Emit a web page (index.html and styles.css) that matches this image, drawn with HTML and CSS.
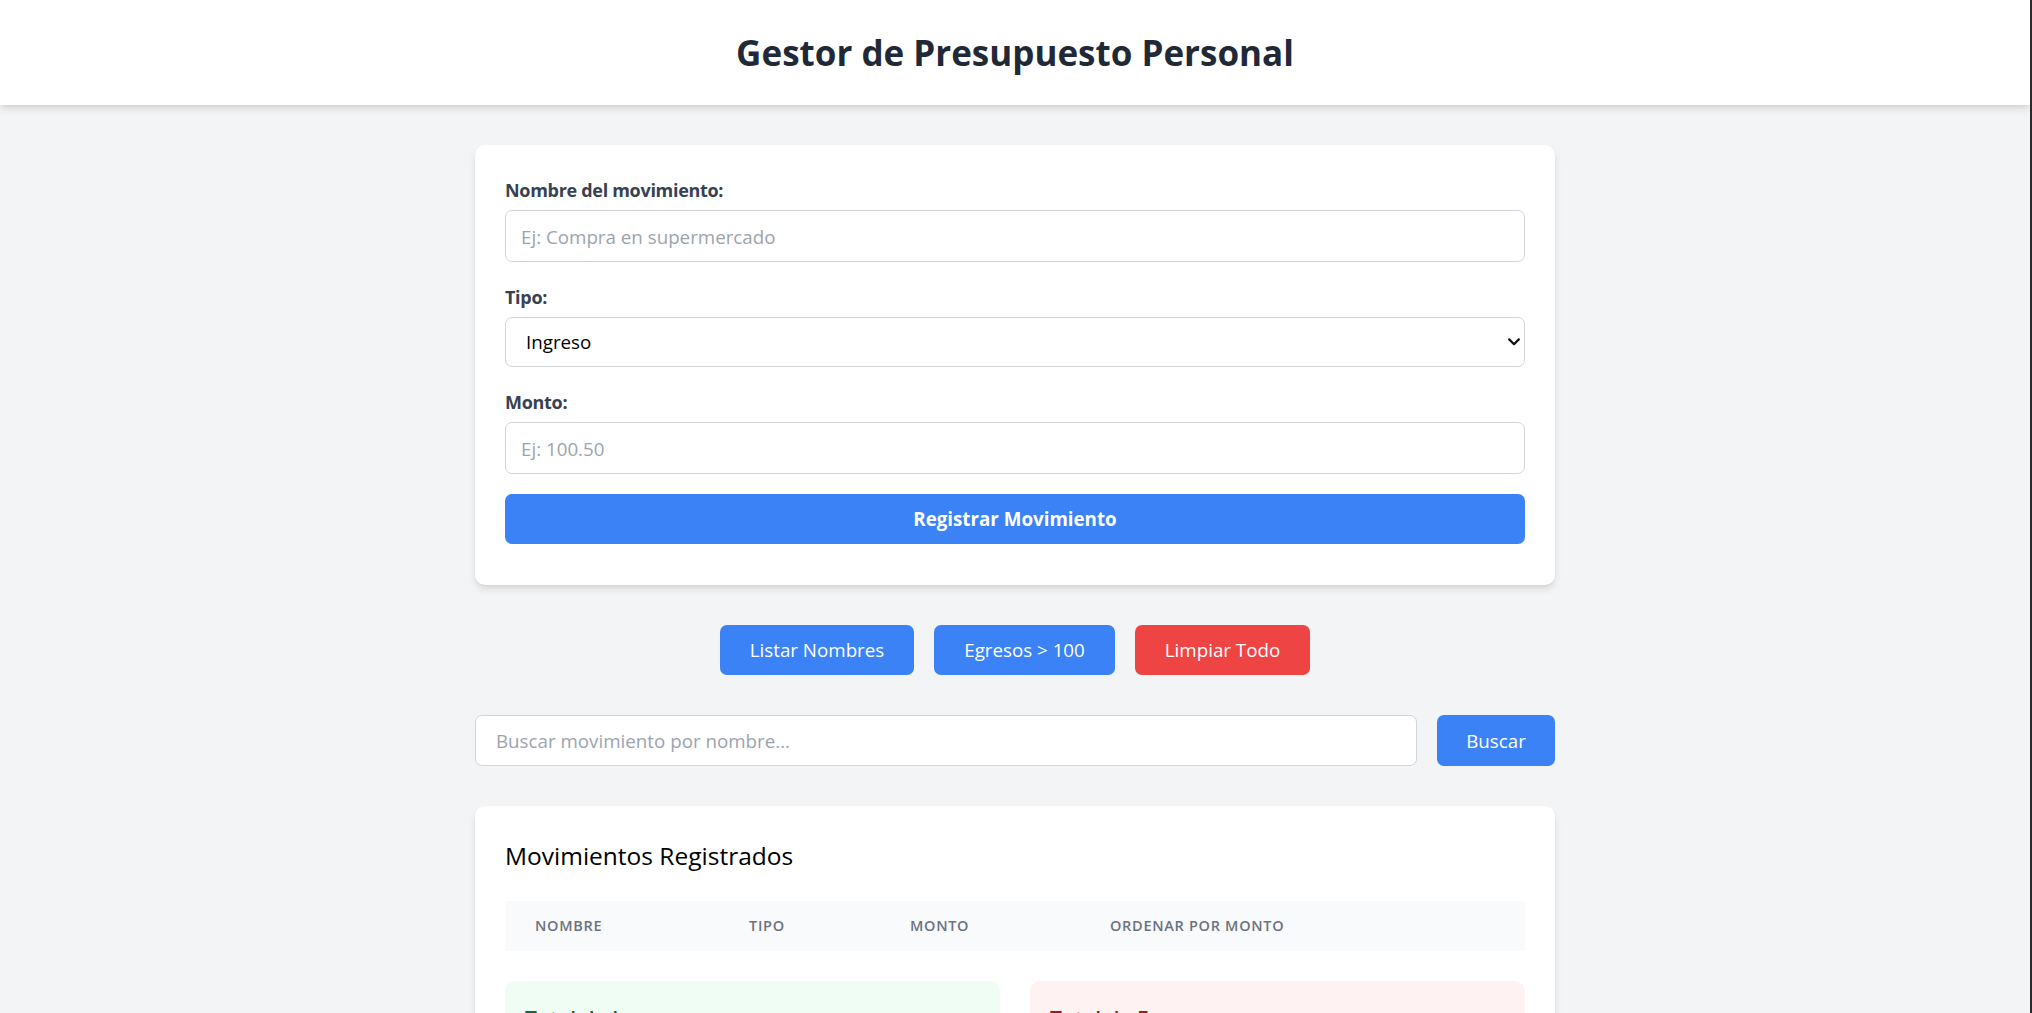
FILE: index.html
```html
<!DOCTYPE html>
<html lang="es">
<head>
<meta charset="utf-8">
<title>Gestor de Presupuesto Personal</title>
<link rel="stylesheet" href="styles.css">
</head>
<body>
<header class="topbar">
  <h1 class="title">Gestor de Presupuesto Personal</h1>
</header>
<main class="container">
  <section class="card form-card">
    <form class="form">
      <div class="field">
        <label class="label" for="nombre">Nombre del movimiento:</label>
        <input class="input" id="nombre" type="text" placeholder="Ej: Compra en supermercado">
      </div>
      <div class="field">
        <label class="label" for="tipo">Tipo:</label>
        <div class="select-wrap">
          <select class="select" id="tipo">
            <option>Ingreso</option>
            <option>Egreso</option>
          </select>
          <svg class="chevron" viewBox="0 0 12 8" aria-hidden="true"><path d="M1.2 1.4 6 6.2l4.8-4.8" fill="none" stroke="#111" stroke-width="2.2" stroke-linecap="round" stroke-linejoin="round"/></svg>
        </div>
      </div>
      <div class="field">
        <label class="label" for="monto">Monto:</label>
        <input class="input" id="monto" type="number" placeholder="Ej: 100.50">
      </div>
      <button class="btn btn-blue btn-block" type="button">Registrar Movimiento</button>
    </form>
  </section>

  <div class="actions">
    <button class="btn btn-blue" type="button">Listar Nombres</button>
    <button class="btn btn-blue" type="button">Egresos &gt; 100</button>
    <button class="btn btn-red" type="button">Limpiar Todo</button>
  </div>

  <div class="search">
    <input class="input search-input" type="text" placeholder="Buscar movimiento por nombre...">
    <button class="btn btn-blue search-btn" type="button">Buscar</button>
  </div>

  <section class="card list-card">
    <h2 class="list-title">Movimientos Registrados</h2>
    <table class="table">
      <colgroup>
        <col class="col-nombre">
        <col class="col-tipo">
        <col class="col-monto">
        <col class="col-orden">
      </colgroup>
      <thead>
        <tr>
          <th>Nombre</th>
          <th>Tipo</th>
          <th>Monto</th>
          <th>Ordenar por monto</th>
        </tr>
      </thead>
      <tbody></tbody>
    </table>
    <div class="totals">
      <div class="total total-in">
        <h3 class="total-label">Total de Ingresos</h3>
        <p class="total-amount">$0.00</p>
      </div>
      <div class="total total-out">
        <h3 class="total-label">Total de Egresos</h3>
        <p class="total-amount">$0.00</p>
      </div>
    </div>
  </section>
</main>
</body>
</html>
```
FILE: styles.css
```css
html {
  scrollbar-width: none;
  border-right: 2px solid #2b2b2b;
}
* { box-sizing: border-box; }
body {
  margin: 0;
  background: #f3f4f6;
  font-family: "Open Sans", "Noto Sans", sans-serif;
  color: #111827;
}
.topbar {
  height: 105px;
  background: #fff;
  display: flex;
  align-items: center;
  justify-content: center;
  box-shadow: 0 5px 8px -1px rgba(0,0,0,.1), 0 2px 5px -2px rgba(0,0,0,.1);
  position: relative;
  z-index: 1;
}
.title {
  margin: 0;
  font-size: 35px;
  line-height: 45px;
  font-weight: 700;
  color: #1f2937;
}
.container {
  width: 1080px;
  margin: 0 auto;
  padding: 40px 0;
}
.card {
  background: #fff;
  border-radius: 10px;
  box-shadow: 0 5px 8px -1px rgba(0,0,0,.1), 0 2px 5px -2px rgba(0,0,0,.1);
}
.form-card { padding: 30px 30px 41px; }
.field { margin-bottom: 20px; }
.label {
  display: block;
  font-size: 18px;
  line-height: 30px;
  font-weight: 700;
  letter-spacing: -0.3px;
  color: #374151;
  margin-bottom: 5px;
}
.input, .select {
  display: block;
  width: 100%;
  font-family: inherit;
  font-size: 18.75px;
  line-height: 30px;
  border: 1px solid #d1d5db;
  border-radius: 7px;
  background: #fff;
  color: #111;
  outline: none;
}
.input {
  height: 52px;
  padding: 10px 15px;
}
.input::placeholder { color: #9ca3af; }
.input::-webkit-outer-spin-button,
.input::-webkit-inner-spin-button { -webkit-appearance: none; margin: 0; }
.select-wrap { position: relative; }
.select {
  appearance: none;
  -webkit-appearance: none;
  height: 50px;
  padding: 0 40px 0 20px;
  color: #000;
}
.chevron {
  position: absolute;
  right: 5px;
  top: 50%;
  width: 12px;
  height: 8px;
  margin-top: -4px;
  pointer-events: none;
}
.btn {
  font-family: inherit;
  font-size: 18.75px;
  line-height: 30px;
  height: 50px;
  padding: 0 30px;
  border: 0;
  border-radius: 7px;
  color: #fff;
  cursor: pointer;
}
.btn-blue { background: #3b82f6; }
.btn-red { background: #ef4444; }
.btn-block {
  display: block;
  width: 100%;
  font-weight: 700;
}
.actions {
  display: flex;
  justify-content: center;
  gap: 20px;
  margin-top: 40px;
}
.search {
  display: flex;
  gap: 20px;
  margin-top: 40px;
}
.search-input {
  flex: 1;
  height: 51px;
  padding: 10px 20px;
}
.search-btn {
  height: 51px;
  width: 118px;
  padding: 0;
}
.list-card {
  margin-top: 40px;
  padding: 30px;
}
.list-title {
  margin: 0 0 28px;
  padding-top: 2px;
  font-size: 24.5px;
  line-height: 35px;
  font-weight: 500;
  color: #000;
}
.table {
  width: 100%;
  border-collapse: collapse;
  table-layout: fixed;
}
.col-nombre { width: 214px; }
.col-tipo { width: 161px; }
.col-monto { width: 200px; }
.table th {
  background: #f9fafb;
  padding: 15px 30px;
  text-align: left;
  font-size: 14.5px;
  line-height: 20px;
  font-weight: 600;
  letter-spacing: 0.7px;
  text-transform: uppercase;
  color: #6b7280;
  white-space: nowrap;
}
.totals {
  display: grid;
  grid-template-columns: 1fr 1fr;
  gap: 30px;
  margin-top: 30px;
}
.total {
  border-radius: 10px;
  padding: 20px;
}
.total-in { background: #f0fdf4; color: #166534; }
.total-out { background: #fef2f2; color: #991b1b; }
.total-label {
  margin: 0;
  font-size: 21px;
  line-height: 36px;
  font-weight: 600;
}
.total-amount {
  margin: 10px 0 0;
  font-size: 28px;
  line-height: 36px;
  font-weight: 700;
}
```
